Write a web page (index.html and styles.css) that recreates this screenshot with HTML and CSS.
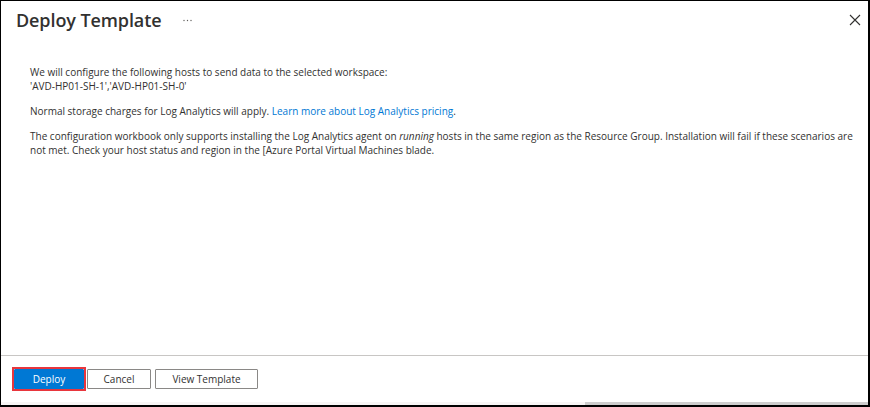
FILE: index.html
```html
<!DOCTYPE html>
<html>
<head>
<meta charset="utf-8">
<link rel="stylesheet" href="styles.css">
</head>
<body>
<div class="frame">
  <div class="header">
    <h1 class="title">Deploy Template</h1>
    <svg class="more" width="9" height="3" viewBox="0 0 9 3"><circle cx="1" cy="1.5" r="0.7" fill="#605e5c"/><circle cx="4.5" cy="1.5" r="0.7" fill="#605e5c"/><circle cx="8" cy="1.5" r="0.7" fill="#605e5c"/></svg>
    <span class="spacer"></span>
    <svg class="close" width="12" height="12" viewBox="0 0 12 12"><path d="M1 1L11 11M11 1L1 11" stroke="#323130" stroke-width="1.1" fill="none"/></svg>
  </div>
  <div class="content">
    <p>We will configure the following hosts to send data to the selected workspace:<br>'AVD-HP01-SH-1','AVD-HP01-SH-0'</p>
    <p>Normal storage charges for Log Analytics will apply. <a class="link">Learn more about Log Analytics pricing</a>.</p>
    <p>The configuration workbook only supports installing the Log Analytics agent on <em>running</em> hosts in the same region as the Resource Group. Installation will fail if these scenarios are not met. Check your host status and region in the [Azure Portal Virtual Machines blade.</p>
  </div>
  <div class="footer">
    <span class="highlight"><button class="btn primary">Deploy</button></span>
    <button class="btn">Cancel</button>
    <button class="btn wide">View Template</button>
  </div>
  <div class="scrollbar"><div class="track"></div><div class="thumb"></div></div>
</div>
</body>
</html>
```
FILE: styles.css
```css
html, body {
  margin: 0;
  padding: 0;
  background: #fff;
}
body {
  font-family: "Open Sans", "Noto Sans", sans-serif;
  color: #323130;
}
.frame {
  width: 867px;
  height: 404px;
  border-top: 1px solid #000;
  border-left: 1px solid #000;
  border-right: 2px solid #000;
  border-bottom: 2px solid #000;
  display: flex;
  flex-direction: column;
  background: #fff;
}
.header {
  display: flex;
  align-items: center;
  height: 38px;
  padding: 0 7px 0 15px;
}
.title {
  margin: 0;
  font-size: 18px;
  font-weight: 600;
  color: #323130;
  letter-spacing: -0.1px;
}
.more {
  margin-left: 22px;
  margin-top: 1px;
}
.spacer { flex: 1; }
.content {
  flex: 1;
  padding: 26px 2px 0 29px;
  font-size: 10px;
  line-height: 14px;
  color: #323130;
}
.content p {
  margin: 0 0 11px 0;
}
.link {
  color: #0078d4;
}
.footer {
  border-top: 1px solid #c8c6c4;
  height: 46px;
  display: flex;
  align-items: center;
  padding: 0 0 0 11px;
}
.highlight {
  display: flex;
  border: 2px solid #e8363d;
}
.btn {
  height: 20px;
  padding: 0;
  font-family: "Open Sans", "Noto Sans", sans-serif;
  font-size: 10px;
  color: #323130;
  background: #fff;
  border: 1px solid #8a8886;
  border-radius: 1px;
  width: 64px;
  margin-left: 1px;
}
.btn.primary {
  background: #0078d4;
  border-color: #0078d4;
  color: #fff;
  width: 70px;
  margin-left: 0;
}
.btn.wide {
  width: 103px;
  margin-left: 4px;
}
.scrollbar {
  display: flex;
  height: 3px;
}
.track {
  width: 584px;
  background: #f7f5f5;
}
.thumb {
  flex: 1;
  background: #cdcdcd;
}
```
